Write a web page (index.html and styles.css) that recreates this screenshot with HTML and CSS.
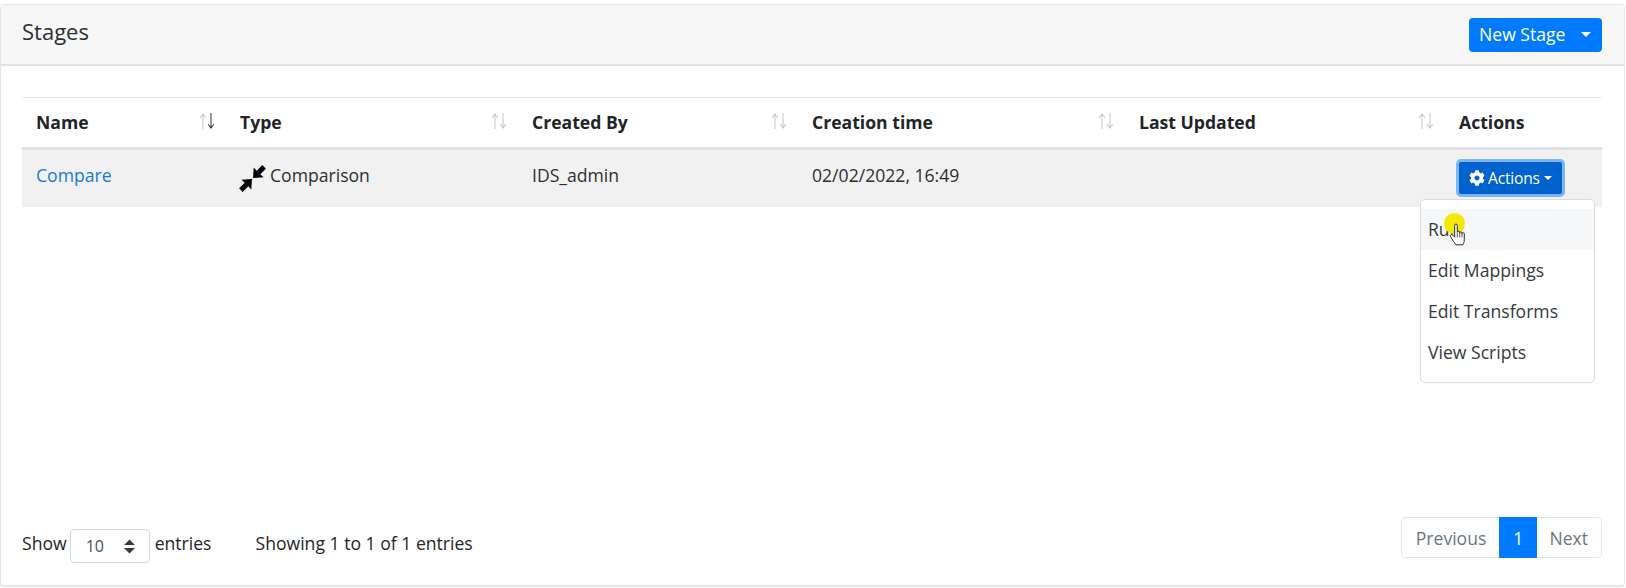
FILE: index.html
```html
<!DOCTYPE html>
<html lang="en">
<head>
<meta charset="utf-8">
<title>Stages</title>
<link rel="stylesheet" href="styles.css">
</head>
<body>
<svg class="defs" aria-hidden="true">
  <symbol id="up" viewBox="0 0 8 17"><path d="M4 17V1M1 5 4 1 7 5"/></symbol>
  <symbol id="down" viewBox="0 0 8 17"><path d="M4 0V16M1 12 4 16 7 12"/></symbol>
</svg>
<div class="card">
  <header class="card-header">
    <h1 class="title">Stages</h1>
    <div class="split-btn"><span>New Stage</span><i class="caret"></i></div>
  </header>
  <main class="card-body">
    <table class="table">
      <colgroup>
        <col class="c1"><col class="c2"><col class="c3"><col class="c4"><col class="c5"><col class="c6">
      </colgroup>
      <thead>
        <tr>
          <th><div class="th"><span>Name</span><span class="sort"><svg class="off"><use href="#up"/></svg><svg class="on"><use href="#down"/></svg></span></div></th>
          <th><div class="th"><span>Type</span><span class="sort"><svg class="off"><use href="#up"/></svg><svg class="off"><use href="#down"/></svg></span></div></th>
          <th><div class="th"><span>Created By</span><span class="sort"><svg class="off"><use href="#up"/></svg><svg class="off"><use href="#down"/></svg></span></div></th>
          <th><div class="th"><span>Creation time</span><span class="sort"><svg class="off"><use href="#up"/></svg><svg class="off"><use href="#down"/></svg></span></div></th>
          <th><div class="th"><span>Last Updated</span><span class="sort"><svg class="off"><use href="#up"/></svg><svg class="off"><use href="#down"/></svg></span></div></th>
          <th class="actions-head">Actions</th>
        </tr>
      </thead>
      <tbody>
        <tr>
          <td><a class="link" href="#">Compare</a></td>
          <td>
            <div class="type-cell">
              <svg class="type-icon" viewBox="0 0 25 25" aria-hidden="true">
                <path d="M24.9 3.400 21.600.100 16.400 5.300 13.600 2.300 13 12 22.700 11.400 19.700 8.600Z"/>
                <path d="M.1 21.600 3.400 24.900 8.600 19.700 11.400 22.700 12 13 2.300 13.600 5.300 16.400Z"/>
              </svg><span>Comparison</span>
            </div>
          </td>
          <td>IDS_admin</td>
          <td>02/02/2022, 16:49</td>
          <td></td>
          <td class="actions-cell">
            <div class="action-btn">
              <svg class="gear" viewBox="0 0 512 512" aria-hidden="true"><path d="M487.4 315.7l-42.6-24.6c4.3-23.2 4.3-47 0-70.2l42.6-24.6c4.9-2.8 7.1-8.6 5.5-14-11.1-35.6-30-67.8-54.7-94.6-3.8-4.1-10-5.1-14.8-2.3L380.8 110c-17.9-15.4-38.5-27.3-60.8-35.1V25.8c0-5.6-3.9-10.5-9.4-11.7-36.7-8.2-74.3-7.8-109.2 0-5.5 1.2-9.4 6.1-9.4 11.7V75c-22.2 7.9-42.8 19.8-60.8 35.1L88.7 85.5c-4.9-2.8-11-1.9-14.8 2.3-24.7 26.7-43.6 58.9-54.7 94.6-1.7 5.4.6 11.2 5.5 14L67.3 221c-4.3 23.2-4.3 47 0 70.2l-42.6 24.6c-4.9 2.8-7.1 8.6-5.5 14 11.1 35.6 30 67.8 54.7 94.6 3.8 4.1 10 5.1 14.8 2.3l42.6-24.6c17.9 15.4 38.5 27.3 60.8 35.1v49.2c0 5.6 3.9 10.5 9.4 11.7 36.7 8.2 74.3 7.8 109.2 0 5.5-1.2 9.4-6.1 9.4-11.7v-49.2c22.2-7.9 42.8-19.8 60.8-35.1l42.6 24.6c4.9 2.8 11 1.9 14.8-2.3 24.7-26.7 43.6-58.9 54.7-94.6 1.5-5.5-.7-11.3-5.6-14.1zM256 336c-44.1 0-80-35.9-80-80s35.9-80 80-80 80 35.9 80 80-35.9 80-80 80z"/></svg>
              <span>Actions</span><i class="caret small"></i>
            </div>
          </td>
        </tr>
      </tbody>
    </table>

    <ul class="menu">
      <li class="hover">Run</li>
      <li>Edit Mappings</li>
      <li>Edit Transforms</li>
      <li>View Scripts</li>
    </ul>

    <div class="cursor">
      <span class="halo"></span>
      <svg class="hand" viewBox="0 0 20 26" aria-hidden="true"><path d="M5.500 2.400c0-1.700 2.700-1.700 2.700 0v7.200c0-1.500 2.500-1.500 2.500 0v.7c0-1.400 2.400-1.400 2.400 0v.8c0-1.300 2.400-1.300 2.400.2v6.200c0 2.700-.9 3.800-1.500 5.200H6.700c-.8-1.700-2-3.200-3.300-5L1.200 14.200c-1-1.500 1-3 2.300-1.700l2 2.200Z" fill="#fff" stroke="#222" stroke-width="1" stroke-linejoin="round"/><path d="M8.200 10v5M10.700 10.300v4.700M13.100 11v4" stroke="#222" stroke-width=".8" fill="none"/></svg>
    </div>

    <footer class="table-foot">
      <div class="length">
        <span>Show</span>
        <div class="select"><span class="select-value">10</span>
          <svg class="updown" viewBox="0 0 12 15" aria-hidden="true"><path d="M6 .5 11.500 6H.5ZM6 14.500.5 9h11Z"/></svg>
        </div>
        <span>entries</span>
      </div>
      <div class="info">Showing 1 to 1 of 1 entries</div>
      <nav class="pager">
        <span class="page prev">Previous</span><span class="page active">1</span><span class="page next">Next</span>
      </nav>
    </footer>
  </main>
</div>
</body>
</html>
```
FILE: styles.css
```css
* { box-sizing: border-box; }
html, body { margin: 0; height: 100%; }
body {
  background: #fff;
  color: #212529;
  font-family: "Open Sans", "Liberation Sans", sans-serif;
  font-size: 17.6px;
  padding-top: 4px;
  overflow: hidden;
}
.defs { display: none; }
.card {
  height: 583px;
  border: 1px solid #e4e6e8;
  border-bottom-width: 2px;
  border-radius: 4px;
  display: flex;
  flex-direction: column;
  margin-right: 1px;
}
.card-header {
  height: 61px;
  flex: none;
  background: #f7f7f7;
  border-bottom: 2px solid #e2e3e5;
  display: flex;
  justify-content: space-between;
  padding: 13px 22px 0 21px;
}
.title {
  margin: 0;
  font-size: 22px;
  font-weight: 400;
  line-height: 27px;
  color: #2b2f33;
}
.split-btn {
  width: 133px;
  height: 34px;
  background: #007bff;
  color: #fff;
  border-radius: 4px;
  display: flex;
  align-items: center;
  justify-content: space-between;
  padding: 0 11px 2px 10px;
  font-size: 17.6px;
}
.caret {
  width: 0;
  height: 0;
  border: 5px solid transparent;
  border-top-color: #fff;
  border-bottom-width: 0;
}
.caret.small { border-width: 4px 4px 0; margin-left: 4px; }
.card-body {
  position: relative;
  flex: 1;
  padding: 31px 22px 0 21px;
  display: flex;
  flex-direction: column;
}
.table {
  width: 100%;
  table-layout: fixed;
  border-collapse: collapse;
  border-top: 1px solid #e3e5e7;
}
.c1 { width: 204px; }
.c2 { width: 292px; }
.c3 { width: 280px; }
.c4 { width: 327px; }
.c5 { width: 320px; }
.c6 { width: 157px; }
th {
  height: 51px;
  padding: 0 11px 1px 14px;
  text-align: left;
  font-weight: 700;
  border-bottom: 3px solid #dee2e6;
}
.th { display: flex; justify-content: space-between; align-items: center; }
.sort { display: flex; margin-top: -3px; }
.sort svg { width: 8px; height: 16px; display: block; fill: none; stroke: #212529; stroke-width: 1.1; }
.off { opacity: .25; }
.on { opacity: .9; }
.actions-head { padding-left: 14px; }
tbody tr { background: #f1f1f1; height: 58px; }
td { padding: 0 14px 6px; vertical-align: middle; color: #2b2f33; }
.link { color: #1a78d6; text-decoration: none; }
.type-cell { display: flex; align-items: center; white-space: nowrap; }
.type-icon { width: 27px; height: 27px; flex: none; margin: 0 4px 0 -1px; fill: #000; position: relative; top: 3px; }
.actions-cell { padding: 0 0 0 11px; }
.action-btn {
  width: 109px;
  height: 38px;
  background: #0062cc;
  color: #fff;
  border: 3px solid #7db5f3;
  border-radius: 5px;
  display: flex;
  align-items: center;
  padding-left: 10px;
  font-size: 15.6px;
  letter-spacing: -.2px;
}
.gear { width: 16px; height: 16px; fill: #fff; margin-right: 3px; flex: none; }
.menu {
  position: absolute;
  left: 1419px;
  top: 133px;
  width: 175px;
  height: 184px;
  margin: 0;
  padding: 9px 0;
  list-style: none;
  background: #fff;
  border: 1px solid #d9dcdf;
  border-radius: 5px;
  z-index: 2;
}
.menu li { height: 41px; line-height: 41px; padding-left: 7px; color: #343a40; }
.menu li.hover { background: #f6f7f8; }
.cursor { position: absolute; left: 1443px; top: 146px; width: 30px; height: 38px; z-index: 3; }
.halo {
  position: absolute;
  left: 0;
  top: 1px;
  width: 21px;
  height: 21px;
  border-radius: 50%;
  background: #f3ea00;
}
.hand { position: absolute; left: 5px; top: 11px; width: 20px; height: 25px; }
.table-foot {
  margin-top: auto;
  height: 68px;
  display: flex;
  align-items: flex-start;
  position: relative;
}
.length { display: flex; align-items: flex-start; height: 34px; margin-top: 11px; line-height: 30px; }
.select {
  width: 80px;
  height: 34px;
  margin: 1px 5px 0 3px;
  border: 1px solid #d5d8db;
  border-radius: 4px;
  display: flex;
  align-items: center;
  justify-content: space-between;
  padding: 0 13px 0 15px;
  font-size: 16px;
  color: #495057;
}
.select-value { line-height: 1; }
.updown { width: 13px; height: 15px; fill: #343a40; }
.info { margin-left: 44px; margin-top: 11px; line-height: 30px; }
.pager {
  margin-left: auto;
  display: flex;
  height: 41px;
  border: 1px solid #e3e5e7;
  border-radius: 4px;
  color: #6c757d;
}
.page { display: flex; align-items: center; padding: 0 13px; }
.page.prev { padding: 0 13px 0 14px; }
.page.next { padding: 0 13px 0 12px; }
.page.active { background: #007bff; color: #fff; width: 38px; justify-content: center; margin: -1px 0; padding: 0; }
```
